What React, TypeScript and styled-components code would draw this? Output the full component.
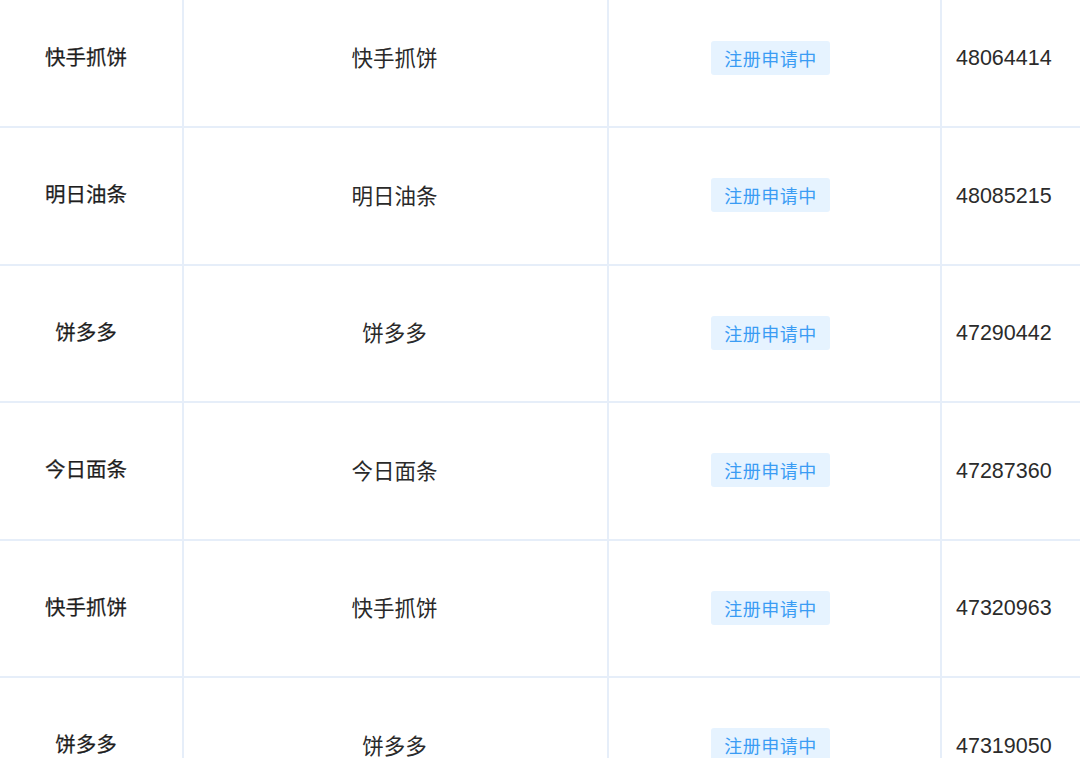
import React, { FC } from "react";
import styled, { createGlobalStyle } from "styled-components";

const GlobalStyle = createGlobalStyle`
  html, body {
    margin: 0;
    padding: 0;
    background: #ffffff;
    overflow: hidden;
  }
  body {
    font-family: "Liberation Sans", "Noto Sans CJK SC", sans-serif;
  }
`;

const Table = styled.div`
  display: flex;
  flex-direction: column;
  margin-top: -9.5px;
  width: 1080px;
`;

const Row = styled.div`
  display: grid;
  grid-template-columns: 184px 425px 333px 1fr;
  height: 137.5px;
  box-sizing: border-box;
  border-bottom: 2px solid #e6eef9;
`;

const Cell = styled.div<{ $align?: "left" | "center"; $last?: boolean }>`
  display: flex;
  align-items: center;
  justify-content: ${(p) => (p.$align === "left" ? "flex-start" : "center")};
  padding-left: ${(p) => (p.$align === "left" ? "14px" : "0")};
  border-right: ${(p) => (p.$last ? "none" : "2px solid #e6eef9")};
  box-sizing: border-box;
`;

const StoreName = styled.span`
  font-family: "Noto Sans CJK SC", sans-serif;
  font-size: 20.5px;
  font-weight: 400;
  -webkit-text-stroke: 0.25px #1e1e1e;
  color: #1e1e1e;
  margin-right: 10px;
  margin-top: -5px;
`;

const BrandName = styled.span`
  font-family: "Noto Sans CJK SC", sans-serif;
  font-size: 21.5px;
  color: #2a2a2a;
  margin-right: 2px;
  margin-top: -3px;
`;

const Tag = styled.span`
  display: inline-flex;
  align-items: center;
  height: 34px;
  padding: 0 13px;
  margin-right: 8px;
  margin-top: -1px;
  border-radius: 3px;
  background: #e6f3ff;
  color: #3a9cf4;
  font-family: "Noto Sans CJK SC", sans-serif;
  font-size: 18px;
  letter-spacing: 0.5px;
`;

const Num = styled.span`
  font-family: "Liberation Sans", Arial, sans-serif;
  font-size: 21.5px;
  color: #2b2b2b;
  margin-top: 1px;
`;

const rows = [
  { name: "快手抓饼", id: "48064414" },
  { name: "明日油条", id: "48085215" },
  { name: "饼多多", id: "47290442" },
  { name: "今日面条", id: "47287360" },
  { name: "快手抓饼", id: "47320963" },
  { name: "饼多多", id: "47319050" },
];

const App: FC = () => {
  return (
    <>
      <GlobalStyle />
      <Table>
        {rows.map((r, i) => (
          <Row key={i}>
            <Cell>
              <StoreName>{r.name}</StoreName>
            </Cell>
            <Cell>
              <BrandName>{r.name}</BrandName>
            </Cell>
            <Cell>
              <Tag>注册申请中</Tag>
            </Cell>
            <Cell $align="left" $last>
              <Num>{r.id}</Num>
            </Cell>
          </Row>
        ))}
      </Table>
    </>
  );
};

export default App;
